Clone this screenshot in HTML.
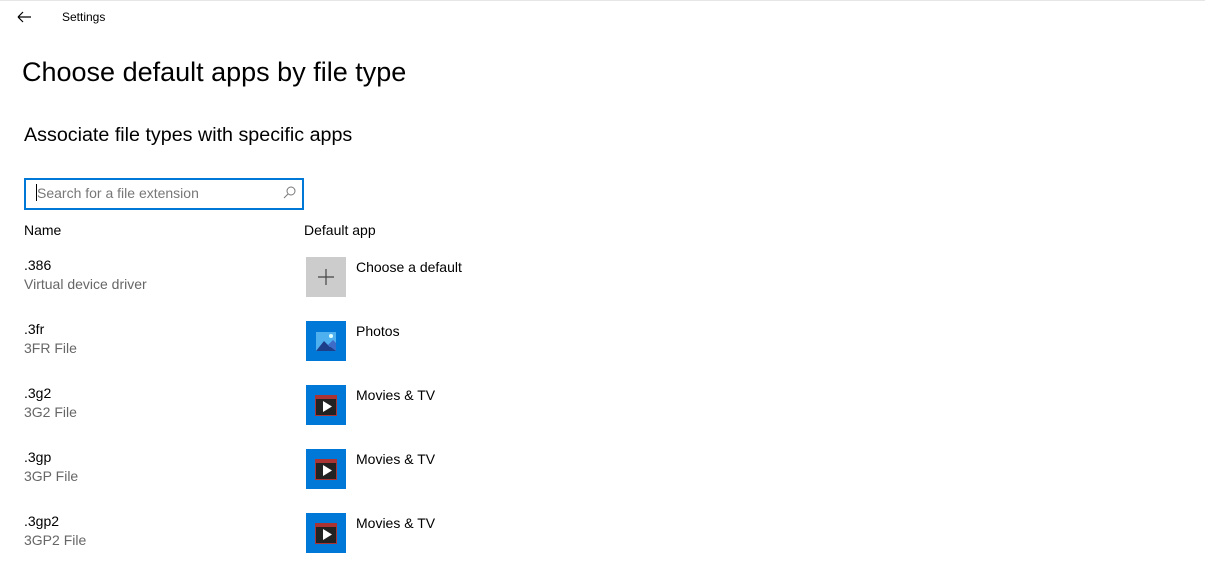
<!DOCTYPE html>
<html><head><meta charset="utf-8"><style>
body{margin:0;width:1205px;height:565px;background:#fff;font-family:"Liberation Sans",sans-serif;color:#000;position:relative;overflow:hidden}
.a{position:absolute;white-space:nowrap}
.s{font-size:14px}
.g{color:#666;font-size:14px}
.tile{position:absolute;left:306px;width:40px;height:40px;background:#0078d7}
</style></head><body>
<div style="position:absolute;left:0;top:0;width:1205px;height:1px;background:#e6e6e6"></div>
<svg class="a" style="left:16px;top:10px" width="16" height="14"><path d="M2 7H15M2 7L7 2M2 7L7 12" stroke="#000" stroke-width="1.2" fill="none"/></svg>
<div class="a" style="left:62px;top:10px;font-size:12px">Settings</div>
<div class="a" style="left:22px;top:57px;font-size:27px;font-weight:300">Choose default apps by file type</div>
<div class="a" style="left:24px;top:124px;font-size:19.7px">Associate file types with specific apps</div>
<div class="a" style="left:24px;top:178px;width:276px;height:28px;border:2px solid #0078d7"></div>
<div class="a" style="left:36px;top:184px;width:1px;height:17px;background:#000"></div>
<div class="a" style="left:37px;top:185px;font-size:14px;color:#777">Search for a file extension</div>
<svg class="a" style="left:283px;top:186px" width="13" height="13"><circle cx="8" cy="5" r="4" stroke="#777" fill="none"/><path d="M5 8L1 12" stroke="#777"/></svg>
<div class="a s" style="left:24px;top:222px">Name</div>
<div class="a s" style="left:304px;top:222px">Default app</div>

<div class="a s" style="left:24px;top:257px">.386</div><div class="a g" style="left:24px;top:276px">Virtual device driver</div>
<div class="tile" style="top:257px;background:#ccc"><svg width="40" height="40"><path d="M20 12V28M12 20H28" stroke="#444" stroke-width="1.2"/></svg></div>
<div class="a s" style="left:356px;top:259px">Choose a default</div>

<div class="a s" style="left:24px;top:321px">.3fr</div><div class="a g" style="left:24px;top:340px">3FR File</div>
<div class="tile" style="top:321px"><svg width="40" height="40"><rect x="10" y="11" width="20" height="19" fill="#4fb0f0"/><path d="M10 30L18 20L24 26L27 23L30 27V30Z" fill="#1d3f8a"/><path d="M22 24L27 19L30 22V30Z" fill="#3d6bc8"/><circle cx="25" cy="15" r="2" fill="#dff"/></svg></div>
<div class="a s" style="left:356px;top:323px">Photos</div>

<div class="a s" style="left:24px;top:385px">.3g2</div><div class="a g" style="left:24px;top:404px">3G2 File</div>
<div class="tile" style="top:385px"><svg width="40" height="40"><rect x="9" y="10" width="22" height="21" fill="#a33" /><rect x="10" y="14" width="20" height="16" fill="#222"/><path d="M17 16V27L26 21.5Z" fill="#fff"/></svg></div>
<div class="a s" style="left:356px;top:387px">Movies &amp; TV</div>

<div class="a s" style="left:24px;top:449px">.3gp</div><div class="a g" style="left:24px;top:468px">3GP File</div>
<div class="tile" style="top:449px"><svg width="40" height="40"><rect x="9" y="10" width="22" height="21" fill="#a33" /><rect x="10" y="14" width="20" height="16" fill="#222"/><path d="M17 16V27L26 21.5Z" fill="#fff"/></svg></div>
<div class="a s" style="left:356px;top:451px">Movies &amp; TV</div>

<div class="a s" style="left:24px;top:513px">.3gp2</div><div class="a g" style="left:24px;top:532px">3GP2 File</div>
<div class="tile" style="top:513px"><svg width="40" height="40"><rect x="9" y="10" width="22" height="21" fill="#a33" /><rect x="10" y="14" width="20" height="16" fill="#222"/><path d="M17 16V27L26 21.5Z" fill="#fff"/></svg></div>
<div class="a s" style="left:356px;top:515px">Movies &amp; TV</div>
</body></html>
